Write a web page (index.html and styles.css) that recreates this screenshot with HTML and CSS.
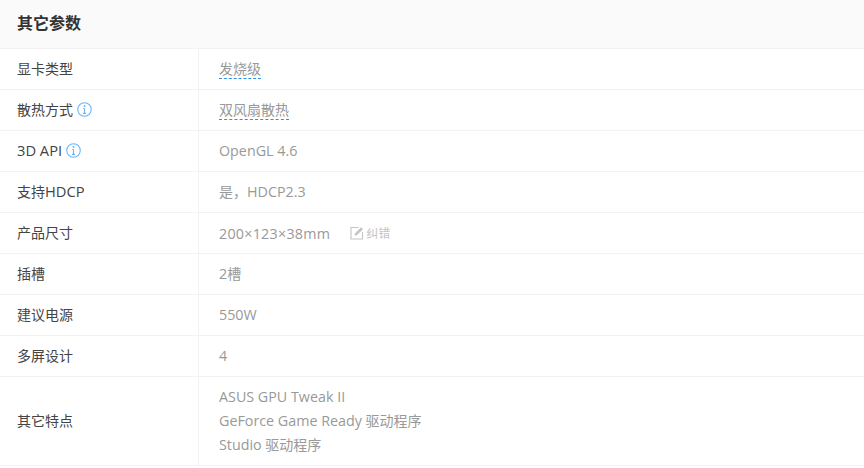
FILE: index.html
```html
<!DOCTYPE html>
<html lang="zh-CN">
<head>
<meta charset="utf-8">
<title>其它参数</title>
<link rel="stylesheet" href="styles.css">
</head>
<body>
<section class="params">
  <h2 class="params-title">其它参数</h2>
  <div class="row">
    <div class="label">显卡类型</div>
    <div class="value value-flush"><span class="tip">发烧级</span></div>
  </div>
  <div class="row">
    <div class="label">散热方式<svg class="info" viewBox="0 0 14 14"><circle cx="7" cy="7" r="6.3"/><path d="M7 6v4.6M5.6 10.6h2.8M5.8 6H7"/><circle class="dot" cx="7" cy="3.8" r="0.9"/></svg></div>
    <div class="value value-flush"><span class="tip">双风扇散热</span></div>
  </div>
  <div class="row">
    <div class="label"><span class="latin">3D API</span><svg class="info" viewBox="0 0 14 14"><circle cx="7" cy="7" r="6.3"/><path d="M7 6v4.6M5.6 10.6h2.8M5.8 6H7"/><circle class="dot" cx="7" cy="3.8" r="0.9"/></svg></div>
    <div class="value"><span class="latin">OpenGL 4.6</span></div>
  </div>
  <div class="row">
    <div class="label"><span>支持<span class="latin">HDCP</span></span></div>
    <div class="value"><span>是，<span class="latin">HDCP2.3</span></span></div>
  </div>
  <div class="row">
    <div class="label">产品尺寸</div>
    <div class="value value-flush"><span class="latin number">200×123×38mm</span><span class="fix"><svg class="edit" viewBox="0 0 14 14"><path class="box" d="M8.5 1.5H1v11.5h11.5V6"/><path class="pen" d="M4.5 9.8l.7-2.6L11 1.2l2 2-5.9 5.9z"/></svg>纠错</span></div>
  </div>
  <div class="row">
    <div class="label">插槽</div>
    <div class="value"><span><span class="latin">2</span>槽</span></div>
  </div>
  <div class="row">
    <div class="label">建议电源</div>
    <div class="value"><span class="latin">550W</span></div>
  </div>
  <div class="row">
    <div class="label">多屏设计</div>
    <div class="value"><span class="latin">4</span></div>
  </div>
  <div class="row row-tall">
    <div class="label">其它特点</div>
    <div class="value value-flush value-list">
      <div class="latin">ASUS GPU Tweak II</div>
      <div><span class="latin">GeForce Game Ready</span> 驱动程序</div>
      <div><span class="latin">Studio</span> 驱动程序</div>
    </div>
  </div>
</section>
</body>
</html>
```

FILE: styles.css
```css
* { box-sizing: border-box; }
html, body { margin: 0; padding: 0; background: #fff; }
body {
  font-family: "Open Sans", "Noto Sans CJK SC", sans-serif;
  font-size: 14px;
  color: #333;
  overflow: hidden;
}
.params { width: 864px; }
.params-title {
  margin: 0;
  height: 49px;
  padding: 0 0 5px 17px;
  display: flex;
  align-items: center;
  background: #fafafa;
  border-bottom: 1px solid #f2f2f2;
  font-size: 16px;
  font-weight: 700;
  color: #333;
}
.row {
  display: flex;
  height: 41px;
  border-bottom: 1px solid #f2f2f2;
}
.row-tall { height: 89px; }
.label {
  width: 199px;
  padding: 0 0 2px 17px;
  display: flex;
  align-items: center;
  border-right: 1px solid #f2f2f2;
  color: #444;
}
.label .latin { font-size: 14.7px; }
.value {
  flex: 1;
  padding: 0 0 2px 20px;
  display: flex;
  align-items: center;
  color: #999;
}
.latin { font-size: 14.3px; }
.number { letter-spacing: 0.25px; }
.value-flush { padding-bottom: 0; }
.value-list {
  flex-direction: column;
  align-items: flex-start;
  justify-content: center;
  line-height: 24px;
}
.tip {
  border-bottom: 1px dashed #2b8fe8;
  line-height: 19px;
}
.info {
  width: 15px;
  height: 15px;
  margin-left: 4px;
  fill: none;
  stroke: #69b4f5;
  stroke-width: 1;
}
.info .dot { fill: #69b4f5; stroke: none; }
.fix {
  display: inline-flex;
  align-items: center;
  margin-left: 20px;
  font-size: 12px;
  color: #c4c4c4;
}
.edit {
  width: 14px;
  height: 14px;
  margin-right: 2px;
  fill: none;
  stroke: #c4c4c4;
  stroke-width: 1.1;
}
.edit .pen { fill: #c4c4c4; stroke: none; }
```
